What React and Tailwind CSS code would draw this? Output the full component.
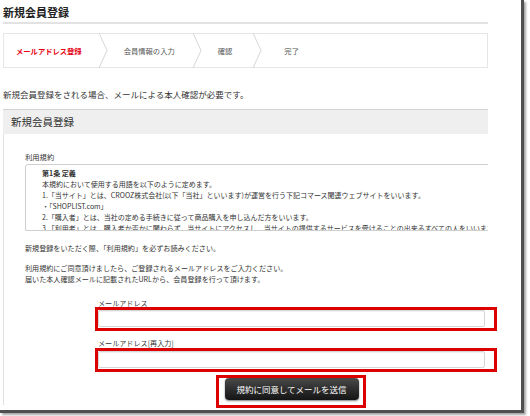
import React from "react";

const font = { fontFamily: '"Noto Sans CJK JP", "Liberation Sans", sans-serif' };

function Chevron() {
  return (
    <svg width="10" height="35" viewBox="0 0 10 35" className="shrink-0 block">
      <polyline points="1,0 9,17.5 1,35" fill="none" stroke="#d6d6d6" strokeWidth="1" />
    </svg>
  );
}

export default function App() {
  return (
    <div className="w-[530px] h-[416px] bg-white" style={font}>
      <div className="relative w-[524px] h-[413px] bg-white border-r-[3px] border-b-[3px] border-[#505050] shadow-[2px_2px_2px_rgba(0,0,0,0.35)]">
        <div className="w-[488px] pl-[3px] overflow-hidden text-[#333]">
          {/* Title */}
          <div className="pt-[5px] text-[11px] leading-[14px] font-bold text-[#222]">新規会員登録</div>
          <div className="mt-[3px] border-t-2 border-[#e2e2e2]"></div>

          {/* Steps */}
          <div className="mt-[9px] h-[35px] border border-[#e6e6e6] flex items-center text-[7.3px] leading-[10px] text-[#555]">
            <div className="pl-[12px] pr-[16px] text-[#e60012] font-bold whitespace-nowrap">メールアドレス登録</div>
            <Chevron />
            <div className="pl-[16px] pr-[17px] whitespace-nowrap">会員情報の入力</div>
            <Chevron />
            <div className="pl-[16px] pr-[20px] whitespace-nowrap">確認</div>
            <Chevron />
            <div className="pl-[22px] whitespace-nowrap">完了</div>
          </div>

          {/* Intro */}
          <div className="mt-[20px] text-[8.5px] leading-[12px] whitespace-nowrap">
            新規会員登録をされる場合、メールによる本人確認が必要です。
          </div>

          {/* Panel */}
          <div className="mt-[9px]">
            <div className="h-[25px] bg-[#efefef] border-t border-[#d2d2d2] flex items-center pl-[8px] text-[10.5px] text-[#333]">
              新規会員登録
            </div>
            <div className="border-l border-[#e0e0e0] pl-[21px] pt-[18px] h-[271px]">
              <div className="text-[7.3px] leading-[10px]">利用規約</div>
              <div className="mt-[2px] w-[480px] h-[67px] border border-[#cfcfcf] rounded-tl-[3px] overflow-hidden pl-[16px] pt-[3px] text-[7px] leading-[11px] whitespace-nowrap">
                <div className="font-bold">第1条 定義</div>
                <div>本規約において使用する用語を以下のように定めます。</div>
                <div>1.「当サイト」とは、CROOZ株式会社(以下「当社」といいます)が運営を行う下記コマース関連ウェブサイトをいいます。</div>
                <div>・「SHOPLIST.com」</div>
                <div>2.「購入者」とは、当社の定める手続きに従って商品購入を申し込んだ方をいいます。</div>
                <div>3.「利用者」とは、購入者か否かに関わらず、当サイトにアクセスし、当サイトの提供するサービスを受けることの出来るすべての人をいいます。</div>
              </div>

              <div className="mt-[12px] text-[7.1px] leading-[11px] whitespace-nowrap">
                新規登録をいただく際、「利用規約」を必ずお読みください。
              </div>
              <div className="mt-[9px] text-[7.1px] leading-[11px] whitespace-nowrap">
                <div>利用規約にご同意頂けましたら、ご登録されるメールアドレスをご入力ください。</div>
                <div>届いた本人確認メールに記載されたURLから、会員登録を行って頂けます。</div>
              </div>

              <div className="ml-[73px] w-[387px]">
                <div className="mt-[13px] text-[7.1px] leading-[10px]">メールアドレス</div>
                <div className="mt-[2px] h-[17px] border border-[#d6d6d6] rounded-[2px] bg-white shadow-[inset_0_1px_1px_rgba(0,0,0,0.06)]"></div>
                <div className="mt-[11px] text-[7.1px] leading-[10px]">メールアドレス[再入力]</div>
                <div className="mt-[3px] h-[17px] border border-[#d6d6d6] rounded-[2px] bg-white shadow-[inset_0_1px_1px_rgba(0,0,0,0.06)]"></div>
                <div className="mt-[10px] flex justify-center">
                  <div className="w-[134px] h-[22px] rounded-[4px] bg-gradient-to-b from-[#4a4a4a] to-[#151515] shadow-[0_1px_2px_rgba(0,0,0,0.5)] flex items-center justify-center text-white text-[8.5px] whitespace-nowrap">
                    規約に同意してメールを送信
                  </div>
                </div>
              </div>
            </div>
          </div>
        </div>

        {/* Red annotation overlays */}
        <div className="absolute left-[95px] top-[307px] w-[402px] h-[24px] border-[3px] border-[#dd0000]"></div>
        <div className="absolute left-[95px] top-[348px] w-[402px] h-[24px] border-[3px] border-[#dd0000]"></div>
        <div className="absolute left-[216px] top-[375px] w-[150px] h-[33px] border-[3px] border-[#dd0000]"></div>
      </div>
    </div>
  );
}
